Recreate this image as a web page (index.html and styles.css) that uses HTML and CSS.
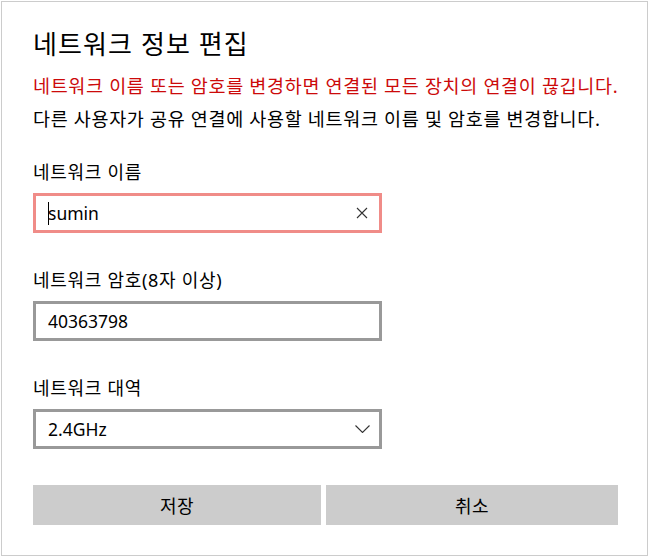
FILE: index.html
```html
<!DOCTYPE html>
<html lang="ko">
<head>
<meta charset="utf-8">
<link rel="stylesheet" href="styles.css">
</head>
<body>
<div class="dialog">
  <h1 class="title">네트워크 정보 편집</h1>
  <p class="warn">네트워크 이름 또는 암호를 변경하면 연결된 모든 장치의 연결이 끊깁니다.</p>
  <p class="desc">다른 사용자가 공유 연결에 사용할 네트워크 이름 및 암호를 변경합니다.</p>

  <div class="field">
    <div class="label">네트워크 이름</div>
    <div class="box box-focus">
      <span class="caret"></span><span class="value">sumin</span>
      <svg class="clear" width="12" height="12" viewBox="0 0 12 12"><path d="M1 1 L11 11 M11 1 L1 11" stroke="#333" stroke-width="1.1" fill="none"/></svg>
    </div>
  </div>

  <div class="field">
    <div class="label">네트워크 암호(8자 이상)</div>
    <div class="box">
      <span class="value">40363798</span>
    </div>
  </div>

  <div class="field">
    <div class="label">네트워크 대역</div>
    <div class="box">
      <span class="value">2.4GHz</span>
      <svg class="chev" width="15" height="8" viewBox="0 0 15 8"><path d="M0.5 0.5 L7.5 7.5 L14.5 0.5" stroke="#333" stroke-width="1.1" fill="none"/></svg>
    </div>
  </div>

  <div class="buttons">
    <button class="btn">저장</button>
    <button class="btn">취소</button>
  </div>
</div>
</body>
</html>
```

FILE: styles.css
```css
html, body {
  margin: 0;
  padding: 0;
  background: #ffffff;
}
body {
  font-family: "Noto Sans", "Noto Sans CJK KR", sans-serif;
  color: #000;
}
.dialog {
  box-sizing: border-box;
  width: 647px;
  height: 555px;
  margin: 1px 0 0 1px;
  border: 1px solid #cccccc;
  background: #fff;
  padding: 26px 29px 0 31px;
}
.title {
  margin: 0;
  font-size: 26px;
  font-weight: normal;
  line-height: 32px;
  letter-spacing: 1.1px;
}
.warn, .desc {
  margin: 0;
  font-size: 18.5px;
  line-height: 33px;
  letter-spacing: 0.66px;
  white-space: nowrap;
}
.warn {
  margin-top: 9px;
  color: #cc0a0a;
}
.field {
  margin-top: 25px;
}
.field + .field {
  margin-top: 35px;
}
.label {
  font-size: 18px;
  line-height: 24px;
  letter-spacing: 0.7px;
}
.box {
  box-sizing: border-box;
  margin-top: 9px;
  width: 349px;
  height: 40px;
  border: 3px solid #999999;
  display: flex;
  align-items: center;
  padding: 0 10px 0 12px;
  font-size: 17.5px;
}
.box-focus {
  border-color: #f08c88;
}
.value {
  flex: 1;
}
.caret {
  display: inline-block;
  width: 0;
  height: 23px;
  border-left: 1px solid #000;
  margin-right: -1px;
}
.clear {
  margin-right: 1px;
}
.chev {
  margin-right: -1px;
}
.buttons {
  margin-top: 36px;
  display: grid;
  grid-template-columns: 288px 1fr;
  gap: 5px;
}
.btn {
  height: 40px;
  border: 0;
  background: #cccccc;
  font-family: "Noto Sans CJK KR", sans-serif;
  font-size: 18px;
  letter-spacing: 0.5px;
  color: #000;
  padding: 0;
}
```
